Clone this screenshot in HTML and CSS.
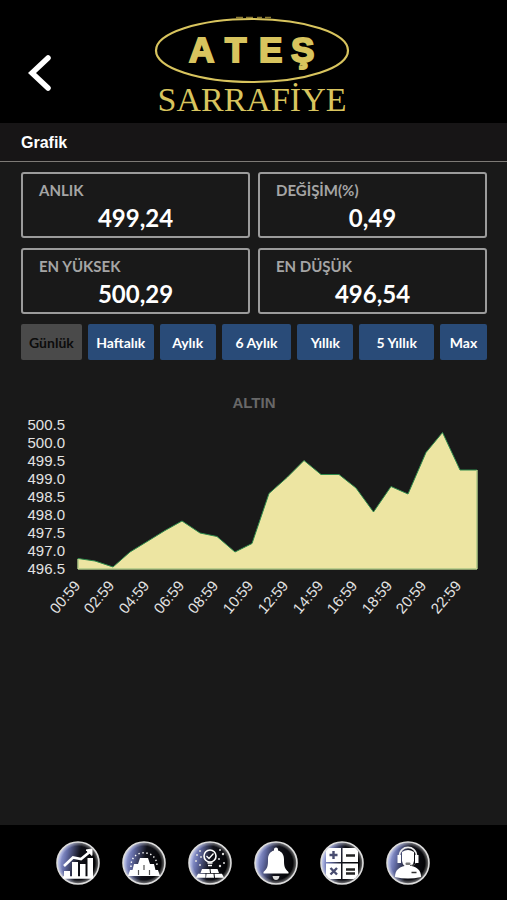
FILE: index.html
```html
<!DOCTYPE html>
<html lang="tr">
<head>
<meta charset="utf-8">
<meta name="viewport" content="width=device-width, initial-scale=1">
<title>Ateş Sarrafiye</title>
<link rel="stylesheet" href="styles.css">
</head>
<body>
<svg class="defs" width="0" height="0" aria-hidden="true">
  <defs>
    <linearGradient id="disc" x1="0" y1="0.4" x2="1" y2="0.6">
      <stop offset="0" stop-color="#a9b3ea"/>
      <stop offset="0.2" stop-color="#656ea8"/>
      <stop offset="0.5" stop-color="#101119"/>
      <stop offset="1" stop-color="#000"/>
    </linearGradient>
    <radialGradient id="rim">
      <stop offset="0.8" stop-color="#fff" stop-opacity="0"/>
      <stop offset="1" stop-color="#fff" stop-opacity="0.5"/>
    </radialGradient>
    <clipPath id="round"><circle cx="22" cy="22" r="20"/></clipPath>
    <g id="base">
      <circle cx="22" cy="22" r="21" fill="url(#disc)"/>
      <circle cx="22" cy="22" r="21" fill="url(#rim)" stroke="#dcdcdc" stroke-width="1.600"/>
    </g>
  </defs>
</svg>

<header class="top">
  <button class="back" type="button" aria-label="Geri">
    <svg width="24" height="38" viewBox="0 0 24 38"><path d="M20 4 L4 19 L20 34" fill="none" stroke="#fff" stroke-width="5.500" stroke-linecap="round" stroke-linejoin="miter"/></svg>
  </button>
  <svg class="logo" width="200" height="104" viewBox="0 0 200 104">
    <path d="M82 3.500h7M92 3.500h7M103 3.500h5M111 3.500h6" stroke="#8d7c34" stroke-width="1.500"/>
    <ellipse cx="98" cy="36.500" rx="96" ry="31.500" fill="none" stroke="#d8c45e" stroke-width="2.200"/>
    <text class="logo-name" x="35 71 105 137" y="48">ATEŞ</text>
    <text class="logo-sub" x="98" y="97" text-anchor="middle">SARRAFİYE</text>
  </svg>
</header>

<div class="heading"><h1>Grafik</h1></div>

<main>
  <dl class="cards">
    <div class="card"><dt>ANLIK</dt><dd>499,24</dd></div>
    <div class="card"><dt>DEĞİŞİM(%)</dt><dd>0,49</dd></div>
    <div class="card"><dt>EN YÜKSEK</dt><dd>500,29</dd></div>
    <div class="card"><dt>EN DÜŞÜK</dt><dd>496,54</dd></div>
  </dl>

  <div class="ranges">
    <button type="button" disabled>Günlük</button>
    <button type="button">Haftalık</button>
    <button type="button">Aylık</button>
    <button type="button">6 Aylık</button>
    <button type="button">Yıllık</button>
    <button type="button">5 Yıllık</button>
    <button type="button">Max</button>
  </div>

  <section class="chart">
    <h2>ALTIN</h2>
    <svg viewBox="0 0 466 206" role="img" aria-label="ALTIN">
      <path d="M57 146.500L74 149L92 155L109 140L127 129L144 118.500L161 109L179 121L196 124.500L214 140L231 131.500L248 81.500L266 65.500L283 48.500L300 62.500L318 62.500L335 76L352.500 100L370 74.500L387 82L405 40.500L421.500 20.500L439 58L456 58V157H57Z" fill="#ede5a2" stroke="#2f8a4c" stroke-width="1"/>
      <path d="M57 147V157H456V58" fill="none" stroke="#ede5a2" stroke-width="1"/>
      <g class="axis" text-anchor="end">
        <text x="44" y="18">500.5</text>
        <text x="44" y="36">500.0</text>
        <text x="44" y="54">499.5</text>
        <text x="44" y="72">499.0</text>
        <text x="44" y="90">498.5</text>
        <text x="44" y="108">498.0</text>
        <text x="44" y="126">497.5</text>
        <text x="44" y="144">497.0</text>
        <text x="44" y="162">496.5</text>
      </g>
      <g class="axis" text-anchor="end">
        <text transform="translate(60 174) rotate(-50)">00:59</text>
        <text transform="translate(94 174) rotate(-50)">02:59</text>
        <text transform="translate(129 174) rotate(-50)">04:59</text>
        <text transform="translate(164 174) rotate(-50)">06:59</text>
        <text transform="translate(198 174) rotate(-50)">08:59</text>
        <text transform="translate(233 174) rotate(-50)">10:59</text>
        <text transform="translate(268 174) rotate(-50)">12:59</text>
        <text transform="translate(303 174) rotate(-50)">14:59</text>
        <text transform="translate(337 174) rotate(-50)">16:59</text>
        <text transform="translate(372 174) rotate(-50)">18:59</text>
        <text transform="translate(406 174) rotate(-50)">20:59</text>
        <text transform="translate(441 174) rotate(-50)">22:59</text>
      </g>
    </svg>
  </section>
</main>

<nav class="tabs">
  <a href="#grafik" aria-label="Grafik">
    <svg viewBox="0 0 44 44"><use href="#base"/>
      <path d="M8 30h6v6H8zM16 21h6v15h-6zM24 23h5.500v13H24zM31.500 17H37v19h-5.500z" fill="#fff"/>
      <path d="M7 36.500h30" stroke="#fff" stroke-width="2.500"/>
      <path d="M8 25L17 16.500L25 18L33 11.500" fill="none" stroke="#fff" stroke-width="2.600"/>
      <path d="M30 9l6-1v6.500z" fill="#fff" stroke="#fff"/>
    </svg>
  </a>
  <a href="#altin" aria-label="Altın">
    <svg viewBox="0 0 44 44"><use href="#base"/>
      <path d="M18 17h8l2 6h4l1.500 6H36l2 6H6l2-6h2.500l1.500-6h4z" fill="#fff"/>
      <path d="M22 24v5M16.500 29v5M27.500 29v5" stroke="#555" stroke-width="1.200"/>
      <path d="M9 26C8 7 36 7 35 26" fill="none" stroke="#fff" stroke-width="1.400" stroke-dasharray="1.400 2.600"/>
    </svg>
  </a>
  <a href="#sarrafiye" aria-label="Sarrafiye">
    <svg viewBox="0 0 44 44"><use href="#base"/>
      <circle cx="22" cy="15" r="6" fill="none" stroke="#fff" stroke-width="1.600"/>
      <path d="M18.500 15l2.500 2.500 4.500-5M19.500 22h5M20 24.500h4" fill="none" stroke="#fff" stroke-width="1.300"/>
      <path d="M14 28h7.500l.5 4H12.500zM22.500 28h7l1.500 4h-8zM10 32.800h7.500v4H8zM18.500 32.800h7l.5 4h-8zM26.500 32.800H34l2 4h-9z" fill="#fff"/>
      <g fill="#ddd"><circle cx="12" cy="10" r="1"/><circle cx="9" cy="14" r="1"/><circle cx="13" cy="16" r="1"/><circle cx="8" cy="20" r="1"/><circle cx="12" cy="24" r="1"/><circle cx="32" cy="9" r="1"/><circle cx="35" cy="13" r="1.200"/><circle cx="31" cy="18" r="1"/><circle cx="36" cy="22" r="1"/><circle cx="32" cy="25" r="1.200"/></g>
    </svg>
  </a>
  <a href="#alarm" aria-label="Alarm">
    <svg viewBox="0 0 44 44"><use href="#base"/>
      <path d="M22 6.500c1.500 0 2.200 1 2 3 4.500 1.300 6 5 6 9 0 7 .5 9 4.500 12.500v1.500h-25V31c4-3.500 4.500-5.500 4.500-12.500 0-4 1.500-7.700 6-9-.2-2 .5-3 2-3z" fill="#fff"/>
      <path d="M18.500 35h7c-.5 3-2 4-3.500 4s-3-1-3.500-4z" fill="#ddd"/>
    </svg>
  </a>
  <a href="#hesapla" aria-label="Hesapla">
    <svg viewBox="0 0 44 44"><use href="#base"/>
      <g clip-path="url(#round)">
        <path d="M6 7h15v14H6zM22.500 7H38v14H22.500zM6 22.500h15V38H6zM22.500 22.500H38V38H22.500z" fill="#fff"/>
      </g>
      <path d="M9.500 14h8M13.500 10v8M10.500 27l6.500 6.500M17 27l-6.500 6.500" stroke="#484c70" stroke-width="2.400"/>
      <path d="M26 14.500h9M26 28.500h9M26 32.500h9" stroke="#222" stroke-width="2.400"/>
    </svg>
  </a>
  <a href="#destek" aria-label="Destek">
    <svg viewBox="0 0 44 44"><use href="#base"/>
      <path d="M9 36c0-7 4-9.500 9.500-11h7c5.500 1.500 9.500 4 9.500 11q-13 3-26 0z" fill="#fff"/>
      <path d="M16 11q6-4 12 0v9q-1 6-6 6t-6-6z" fill="#fff"/>
      <path d="M13.500 15C13.500 3.500 30.500 3.500 30.500 15" fill="none" stroke="#eee" stroke-width="1.600"/>
      <path d="M11.500 14H15v8h-3.500zM29 14h3.500v8H29z" fill="#fff"/>
      <path d="M30 22q-1 2.500-6 2.500" fill="none" stroke="#555" stroke-width="1"/>
      <rect x="19.500" y="21.500" width="5" height="2.500" rx="1" fill="#777"/>
      <path d="M25.500 31.500h5" stroke="#333" stroke-width="1.500"/>
    </svg>
  </a>
</nav>
</body>
</html>
```
FILE: styles.css
```css
* {
  box-sizing: border-box;
}

body {
  margin: 0;
  min-height: 100vh;
  display: flex;
  flex-direction: column;
  background: #191919;
  color: #fff;
  font-family: "Liberation Sans", Arial, sans-serif;
}

.defs {
  position: absolute;
}

.top {
  display: grid;
  grid-template-columns: 1fr auto 1fr;
  align-items: center;
  padding: 14px 0 5px;
  background: #000;
}

.back {
  justify-self: start;
  margin: 14px 0 0 28px;
  padding: 0;
  border: 0;
  background: none;
  cursor: pointer;
}

.back svg,
.logo {
  display: block;
}

.logo-name {
  font: bold 35px "Liberation Sans", Arial, sans-serif;
  fill: #d8c45e;
  stroke: #d8c45e;
  stroke-width: 2px;
}

.logo-sub {
  font: 34px "Liberation Serif", serif;
  fill: #d8c45e;
}

.heading {
  padding: 2px 21px 0;
  background: #171516;
  border-bottom: 1px solid #7d7a76;
}

.heading h1 {
  margin: 0;
  font-size: 16px;
  line-height: 36px;
}

main {
  flex: 1;
  padding: 10px 20px 0 21px;
}

.cards {
  display: grid;
  grid-template-columns: 1fr 1fr;
  gap: 10px 8px;
  margin: 0;
}

.card {
  padding: 5px 16px 1px;
  border: 2px solid #9b9b9b;
  border-radius: 3px;
  font-family: Lato, sans-serif;
  font-weight: bold;
}

.card dt {
  color: #a5a5a5;
  font-size: 15px;
  line-height: 22px;
}

.card dd {
  margin: 0;
  font-size: 24px;
  line-height: 34px;
  text-align: center;
}

.ranges {
  display: grid;
  grid-template-columns: 61fr 66fr 56fr 70fr 56fr 75fr 47fr;
  gap: 6px;
  margin-top: 10px;
}

.ranges button {
  min-width: 0;
  height: 36px;
  padding: 0;
  border: 0;
  border-radius: 2px;
  background: #294b78;
  color: #fff;
  font: bold 14px Lato, sans-serif;
  cursor: pointer;
}

.ranges button:disabled {
  background: #4a4a4a;
  color: #0c0c0c;
  cursor: default;
}

.chart {
  margin-top: 34px;
}

.chart h2 {
  margin: 0;
  color: #686868;
  font-size: 15px;
  line-height: 18px;
  text-align: center;
}

.chart svg {
  display: block;
  width: 100%;
}

.axis {
  font-size: 15px;
  fill: #e2e2e2;
}

.tabs {
  display: flex;
  justify-content: space-between;
  padding: 16px 77px 15px 56px;
  background: #000;
}

.tabs a,
.tabs svg {
  display: block;
  width: 44px;
  height: 44px;
}
```
